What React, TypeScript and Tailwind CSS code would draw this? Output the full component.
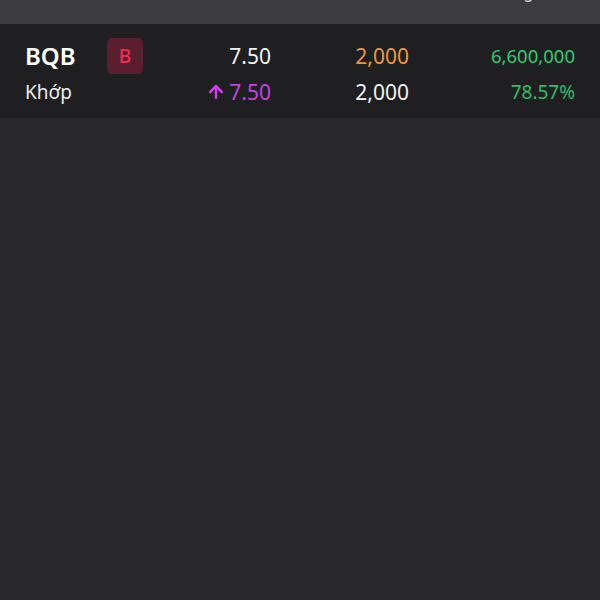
import React from 'react';
import { ArrowUp } from 'lucide-react';

const font = { fontFamily: '"Noto Sans", "Open Sans", sans-serif' };

const App = () => {
    return (
        <div className="w-[600px] h-[600px] bg-[#29282d] overflow-hidden" style={font}>
            {/* header, mostly scrolled out of view */}
            <div className="h-[24px] bg-[#3c3c3f] overflow-hidden">
                <div className="flex px-[25px] -mt-[19px] text-[16px] leading-[22px] text-[#d8d8da]">
                    <div className="w-[118px]">Mã</div>
                    <div className="w-[128px] text-right">Giá</div>
                    <div className="w-[138px] text-right">KL</div>
                    <div className="w-[166px] text-right">Tổng KL/%</div>
                </div>
            </div>

            {/* order row */}
            <div className="bg-[#1f1f22] h-[94px] px-[25px] pt-[13px] flex flex-col gap-[2px]">
                <div className="flex items-center h-[38px]">
                    <div className="w-[82px] text-[24px] font-semibold text-white leading-none">BQB</div>
                    <div className="w-[36px] h-[36px] rounded-[5px] bg-[#5b1e2e] flex items-center justify-center text-[#ec2f52] text-[19px] font-medium">
                        B
                    </div>
                    <div className="w-[128px] text-right text-[21px] text-[#f2f2f2] leading-none">7.50</div>
                    <div className="w-[138px] text-right text-[21px] text-[#e99a3c] leading-none">2,000</div>
                    <div className="w-[166px] text-right text-[18.5px] text-[#33cc6e] leading-none">6,600,000</div>
                </div>
                <div className="flex items-center h-[30px]">
                    <div className="w-[118px] text-[19px] text-[#ececec] leading-none">Khớp</div>
                    <div className="w-[128px] flex items-center justify-end gap-[3px] text-[21px] text-[#c443e3] leading-none">
                        <ArrowUp size={20} strokeWidth={3} className="text-[#d33ef0]" />
                        <span>7.50</span>
                    </div>
                    <div className="w-[138px] text-right text-[21px] text-[#f2f2f2] leading-none">2,000</div>
                    <div className="w-[166px] text-right text-[19px] text-[#2fbd66] leading-none">78.57%</div>
                </div>
            </div>
        </div>
    );
};

export default App;
